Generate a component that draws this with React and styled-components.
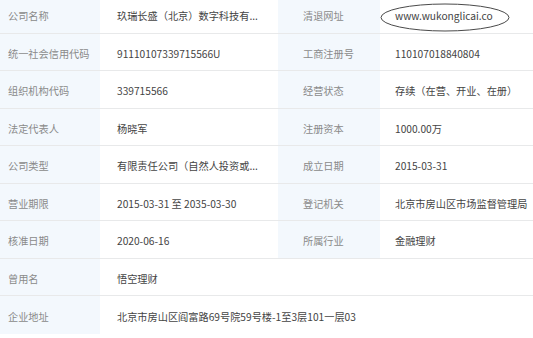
import { Fragment } from "react";
import styled, { createGlobalStyle } from "styled-components";

const GlobalStyle = createGlobalStyle`
  html, body {
    margin: 0;
    padding: 0;
    background: #ffffff;
    overflow: hidden;
  }
  body {
    font-family: "Noto Sans CJK SC", "Noto Sans", sans-serif;
  }
`;

const Wrapper = styled.div`
  position: relative;
  width: 533px;
  height: 338px;
  overflow: hidden;
`;

const Table = styled.div`
  display: grid;
  grid-template-columns: 100px 178px 102px 153px;
  grid-auto-rows: 37.5px;
  margin-top: -4px;
`;

const Label = styled.div`
  display: flex;
  align-items: center;
  padding: 3px 0 0 ${({ $pad }) => $pad || 25}px;
  background: #f3f8fd;
  border-bottom: ${({ $last }) => ($last ? "none" : "1px solid #e8e9ea")};
  color: #8a8a8a;
  font-size: 10.2px;
  white-space: nowrap;
  box-sizing: border-box;
`;

const Value = styled.div`
  display: flex;
  align-items: center;
  padding: 3px 0 0 ${({ $pad }) => $pad || 16}px;
  grid-column: span ${({ $span }) => $span || 1};
  border-bottom: ${({ $last }) => ($last ? "none" : "1px solid #e8e9ea")};
  color: #444444;
  font-size: 10.2px;
  white-space: nowrap;
  overflow: hidden;
  box-sizing: border-box;
`;

const Circle = styled.svg`
  position: absolute;
  left: 378px;
  top: 1px;
  width: 134px;
  height: 33px;
  pointer-events: none;
`;

const rows = [
  ["公司名称", "玖瑞长盛（北京）数字科技有...", "清退网址", "www.wukonglicai.co"],
  ["统一社会信用代码", "91110107339715566U", "工商注册号", "110107018840804"],
  ["组织机构代码", "339715566", "经营状态", "存续（在营、开业、在册）"],
  ["法定代表人", "杨晓军", "注册资本", "1000.00万"],
  ["公司类型", "有限责任公司（自然人投资或...", "成立日期", "2015-03-31"],
  ["营业期限", "2015-03-31 至 2035-03-30", "登记机关", "北京市房山区市场监督管理局"],
  ["核准日期", "2020-06-16", "所属行业", "金融理财"],
];

export default function App() {
  return (
    <Wrapper>
      <GlobalStyle />
      <Table>
        {rows.map(([l1, v1, l2, v2]) => (
          <Fragment key={l1}>
            <Label $pad={8}>{l1}</Label>
            <Value $pad={17}>{v1}</Value>
            <Label>{l2}</Label>
            <Value $pad={15}>{v2}</Value>
          </Fragment>
        ))}
        <Label $pad={8}>曾用名</Label>
        <Value $pad={17} $span={3}>悟空理财</Value>
        <Label $pad={8} $last>企业地址</Label>
        <Value $pad={17} $span={3} $last>
          北京市房山区阎富路69号院59号楼-1至3层101一层03
        </Value>
      </Table>
      <Circle viewBox="0 0 134 33">
        <ellipse cx="67" cy="16.5" rx="64" ry="13.5" fill="none" stroke="#4a4a4a" strokeWidth="1" />
      </Circle>
    </Wrapper>
  );
}
